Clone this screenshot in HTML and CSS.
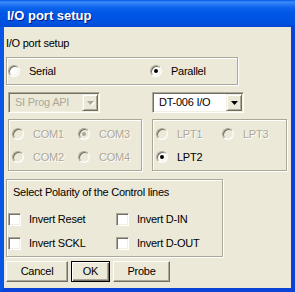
FILE: index.html
```html
<!DOCTYPE html>
<html>
<head>
<meta charset="utf-8">
<link rel="stylesheet" href="styles.css">
</head>
<body>
<div class="window">
  <div class="titlebar"><span class="title">I/O port setup</span></div>
  <div class="frame">
    <div class="client">
      <div class="label">I/O port setup</div>
      <div class="group g-mode">
        <div class="opt"><span class="radio"></span><span>Serial</span></div>
        <div class="opt"><span class="radio checked"></span><span>Parallel</span></div>
      </div>
      <div class="combo-row">
        <div class="combo disabled"><span class="combo-text">SI Prog API</span><span class="drop"><svg width="7" height="4" viewBox="0 0 7 4"><polygon points="0,0 7,0 3.5,4"/></svg></span></div>
        <div class="combo"><span class="combo-text">DT-006 I/O</span><span class="drop"><svg width="7" height="4" viewBox="0 0 7 4"><polygon points="0,0 7,0 3.5,4"/></svg></span></div>
      </div>
      <div class="port-row">
        <div class="group ports g-com">
          <div class="opt disabled"><span class="radio"></span><span>COM1</span></div>
          <div class="opt disabled"><span class="radio checked"></span><span>COM3</span></div>
          <div class="opt disabled"><span class="radio"></span><span>COM2</span></div>
          <div class="opt disabled"><span class="radio"></span><span>COM4</span></div>
        </div>
        <div class="group ports g-lpt">
          <div class="opt disabled"><span class="radio"></span><span>LPT1</span></div>
          <div class="opt disabled"><span class="radio"></span><span>LPT3</span></div>
          <div class="opt"><span class="radio checked"></span><span>LPT2</span></div>
        </div>
      </div>
      <div class="group g-pol">
        <div class="pol-label">Select Polarity of the Control lines</div>
        <div class="checks">
          <div class="opt chk-opt"><span class="check"></span><span>Invert Reset</span></div>
          <div class="opt chk-opt"><span class="check"></span><span>Invert D-IN</span></div>
          <div class="opt chk-opt"><span class="check"></span><span>Invert SCKL</span></div>
          <div class="opt chk-opt"><span class="check"></span><span>Invert D-OUT</span></div>
        </div>
      </div>
      <div class="buttons">
        <div class="btn btn-cancel">Cancel</div>
        <div class="btn btn-ok">OK</div>
        <div class="btn btn-probe">Probe</div>
      </div>
    </div>
  </div>
</div>
</body>
</html>
```

FILE: styles.css
```css
html, body {
  margin: 0;
  padding: 0;
  background: #ECE9D8;
}
.window {
  width: 295px;
  height: 292px;
  display: flex;
  flex-direction: column;
  font-family: "Liberation Sans", Arial, sans-serif;
  font-size: 11px;
  letter-spacing: -0.25px;
  color: #000;
}
.titlebar {
  height: 27px;
  box-sizing: border-box;
  padding: 4px 0 0 7px;
  background: linear-gradient(to bottom, #0058EE 0px, #3D8BF8 2px, #2A7BF5 4px, #0A62EC 8px, #0055E5 14px, #0054E3 20px, #0050DC 24px, #0046D2 27px);
}
.title {
  display: block;
  line-height: 23px;
  font-size: 13px;
  font-weight: bold;
  letter-spacing: 0;
  color: #fff;
  text-shadow: 1px 1px 0 #0A1883;
}
.frame {
  flex: 1;
  display: flex;
  border-left: 4px solid #0856E6;
  border-right: 4px solid #0A43D5;
  border-bottom: 4px solid #0A43D5;
  box-shadow: inset 1px 0 0 #0030C8;
}
.client {
  flex: 1;
  background: #ECE9D8;
  display: flex;
  flex-direction: column;
  align-items: flex-start;
}
.label {
  margin: 10px 0 0 2px;
  line-height: 13px;
}
.group {
  box-sizing: border-box;
  border: 1px solid #ACA899;
  box-shadow: inset 1px 1px 0 #fff, 1px 1px 0 #fff;
}
.g-mode {
  margin: 7px 0 0 2px;
  width: 232px;
  height: 28px;
  display: grid;
  grid-template-columns: 142px auto;
  align-items: center;
  padding-left: 1px;
}
.opt {
  display: flex;
  align-items: center;
  gap: 9px;
  line-height: 13px;
  height: 13px;
}
.opt.disabled {
  color: #ACA899;
  text-shadow: 1px 1px 0 #fff;
}
.radio {
  position: relative;
  box-sizing: border-box;
  width: 12px;
  height: 12px;
  flex: none;
  border-radius: 50%;
  border: 1px solid;
  border-color: #ACA899 #fff #fff #ACA899;
  background: #fff;
  box-shadow: inset 1px 1px 0 #716F64, inset -1px -1px 0 #F1EFE2;
}
.disabled .radio {
  background: #ECE9D8;
}
.radio.checked::after {
  content: "";
  position: absolute;
  left: 3px;
  top: 3px;
  width: 4px;
  height: 4px;
  border-radius: 50%;
  background: #000;
}
.disabled .radio.checked::after {
  background: #ACA899;
}
.combo-row {
  margin: 7px 0 0 4px;
  display: flex;
  gap: 52px;
}
.combo {
  box-sizing: border-box;
  width: 92px;
  height: 21px;
  display: flex;
  padding: 1px;
  border: 1px solid;
  border-color: #ACA899 #fff #fff #ACA899;
  box-shadow: inset 1px 1px 0 #716F64, inset -1px -1px 0 #F1EFE2;
  background: #fff;
}
.combo.disabled {
  background: #ECE9D8;
  color: #ACA899;
}
.combo-text {
  flex: 1;
  padding-left: 5px;
  line-height: 17px;
}
.drop {
  box-sizing: border-box;
  width: 16px;
  display: flex;
  align-items: center;
  justify-content: center;
  background: #ECE9D8;
  border: 1px solid;
  border-color: #F1EFE2 #716F64 #716F64 #F1EFE2;
  box-shadow: inset 1px 1px 0 #fff, inset -1px -1px 0 #ACA899;
}
.drop svg {
  fill: #000;
}
.combo.disabled .drop svg {
  fill: #ACA899;
  filter: drop-shadow(1px 1px 0 #fff);
}
.port-row {
  margin: 6px 0 0 4px;
  display: flex;
  gap: 10px;
}
.ports {
  height: 52px;
  display: grid;
  grid-template-columns: 66px 66px;
  grid-auto-rows: 12px;
  row-gap: 11px;
  padding: 8px 0 0 3px;
  align-content: start;
}
.ports .opt {
  height: 12px;
}
.g-com {
  width: 134px;
}
.g-lpt {
  width: 135px;
}
.g-pol {
  margin: 8px 0 0 2px;
  width: 217px;
  height: 78px;
  padding: 6px 0 0 1px;
}
.pol-label {
  margin-left: 5px;
  line-height: 13px;
}
.checks {
  margin-top: 14px;
  display: grid;
  grid-template-columns: 108px auto;
  grid-auto-rows: 13px;
  row-gap: 11px;
}
.chk-opt {
  gap: 8px;
}
.check {
  box-sizing: border-box;
  width: 13px;
  height: 13px;
  flex: none;
  border: 1px solid;
  border-color: #ACA899 #fff #fff #ACA899;
  background: #fff;
  box-shadow: inset 1px 1px 0 #716F64, inset -1px -1px 0 #F1EFE2;
}
.buttons {
  margin: 4px 0 0 2px;
  display: flex;
  gap: 3px;
}
.btn {
  box-sizing: border-box;
  height: 21px;
  display: flex;
  align-items: center;
  justify-content: center;
  border: 1px solid;
  border-color: #fff #716F64 #716F64 #fff;
  box-shadow: inset -1px -1px 0 #ACA899;
  background: #ECE9D8;
  line-height: 13px;
}
.btn-cancel { width: 62px; }
.btn-ok {
  width: 39px;
  border: 1px solid #000;
  box-shadow: inset 1px 1px 0 #fff, inset -1px -1px 0 #716F64, inset -2px -2px 0 #ACA899;
}
.btn-probe { width: 57px; }
```
